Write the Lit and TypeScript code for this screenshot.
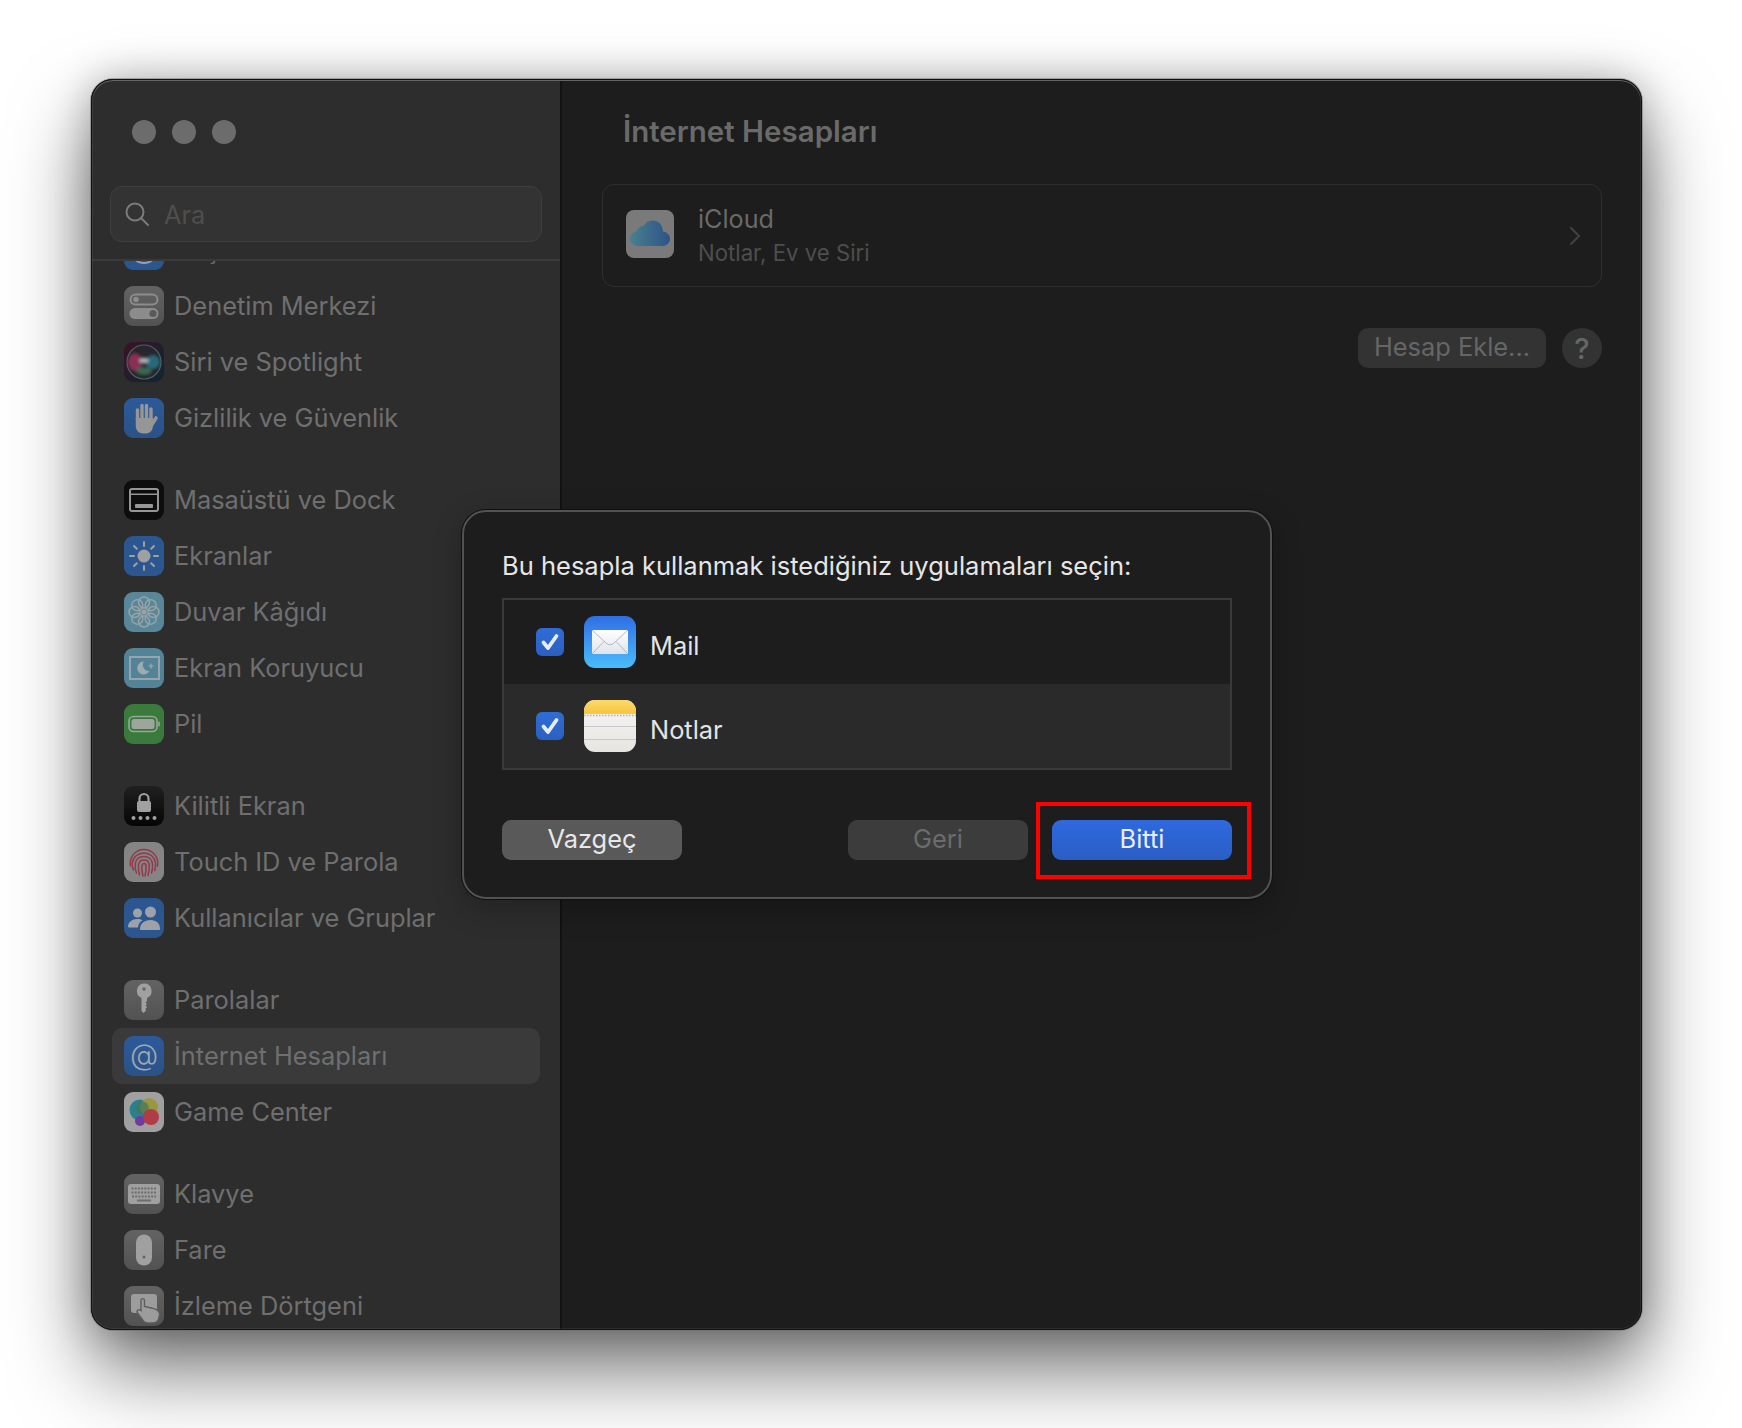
import { LitElement, html, css, svg } from 'lit';
import { customElement } from 'lit/decorators.js';

const FONT = 'Inter, "Noto Sans", sans-serif';

// sidebar icons, all drawn in a 40x40 box
const gray = '#969696';
const icons: Record<string, any> = {
  access: svg`<rect width="40" height="40" rx="9" fill="#2c5690"/><circle cx="20" cy="20" r="13" fill="none" stroke="#8f9fb5" stroke-width="2"/>`,
  control: svg`<rect width="40" height="40" rx="9" fill="url(#gGray)"/>
    <rect x="6.500" y="8.500" width="27" height="10" rx="5" fill="none" stroke="#8c8c8c" stroke-width="2"/><circle cx="12" cy="13.500" r="2.800" fill="#8c8c8c"/>
    <rect x="5.500" y="22" width="29" height="11" rx="5.500" fill="#8c8c8c"/><circle cx="29" cy="27.500" r="3.600" fill="#5a5a5a"/>`,
  siri: svg`<rect width="40" height="40" rx="9" fill="url(#gSiri)"/>
    <circle cx="20" cy="20" r="17" fill="#26262c" stroke="#4f6063" stroke-width="1.200"/>
    <g filter="url(#fSoft)">
      <ellipse cx="11" cy="20" rx="7" ry="9" fill="#8a2f55"/>
      <ellipse cx="29" cy="20" rx="7" ry="7" fill="#27697a"/>
      <ellipse cx="20" cy="29" rx="8" ry="4" fill="#37684f"/>
      <ellipse cx="20" cy="18.500" rx="5" ry="3" fill="#a9a9b4"/>
    </g>`,
  hand: svg`<rect width="40" height="40" rx="9" fill="url(#gBlue)"/>
    <g stroke="${gray}" stroke-linecap="round" fill="none"><path d="M13.500 22V12M18 20V7.500M22.500 20V7.500M27 22V11" stroke-width="3.400"/><path d="M27 28l5-8" stroke-width="3.600"/></g>
    <path d="M11.800 20h17v8.500c0 4.500-3.500 7-7.500 7h-2c-4.500 0-7.500-3-7.500-7.500z" fill="${gray}"/>`,
  desktop: svg`<rect width="40" height="40" rx="9" fill="#0d0d0d"/><rect x="6" y="9" width="28" height="22" rx="2" fill="none" stroke="#969696" stroke-width="2"/><rect x="6" y="13.500" width="28" height="1.500" fill="#969696"/><rect x="11" y="24" width="18" height="4" rx="1" fill="#969696"/>`,
  display: svg`<rect width="40" height="40" rx="9" fill="#2c5690"/><circle cx="20" cy="20" r="6.500" fill="#a0a0a0"/>
    <g stroke="#a0a0a0" stroke-width="2" stroke-linecap="round"><path d="M20 6v4M20 30v4M6 20h4M30 20h4M10 10l2.800 2.800M27.200 27.200l2.800 2.800M30 10l-2.800 2.800M12.800 27.200L10 30"/></g>`,
  wallpaper: svg`<rect width="40" height="40" rx="9" fill="#588799"/>
    <g fill="none" stroke="#98a3a7" stroke-width="1.500"><circle cx="20" cy="10.500" r="5.500"/><circle cx="20" cy="29.500" r="5.500"/><circle cx="10.500" cy="20" r="5.500"/><circle cx="29.500" cy="20" r="5.500"/><circle cx="13.300" cy="13.300" r="5.500"/><circle cx="26.700" cy="13.300" r="5.500"/><circle cx="13.300" cy="26.700" r="5.500"/><circle cx="26.700" cy="26.700" r="5.500"/></g><circle cx="20" cy="20" r="2.500" fill="#98a3a7"/>`,
  saver: svg`<rect width="40" height="40" rx="9" fill="#538396"/><rect x="6" y="9" width="29" height="22" fill="none" stroke="#96a5ab" stroke-width="2"/>
    <path d="M20 13.500a6.500 6.500 0 1 0 5.500 9.500a6 6 0 0 1-5.500-9.500z" fill="#9eabaf"/><path d="M27 15.500v5M24.500 18h5" stroke="#9eabaf" stroke-width="1.200"/>`,
  battery: svg`<rect width="40" height="40" rx="9" fill="#3a7a3d"/><rect x="5" y="12.500" width="28" height="15" rx="4.500" fill="none" stroke="#9aa59a" stroke-width="1.600"/><rect x="7.500" y="15" width="23" height="10" rx="2.500" fill="#9da59d"/><rect x="34.200" y="17.500" width="1.600" height="5" rx=".8" fill="#9aa59a"/>`,
  lock: svg`<rect width="40" height="40" rx="9" fill="url(#gBlack)"/><path d="M15.500 16v-3.500a4.500 4.500 0 0 1 9 0V16" fill="none" stroke="#a0a0a0" stroke-width="2.200"/><rect x="13" y="15" width="14" height="11" rx="2" fill="#a0a0a0"/>
    <g fill="#a0a0a0"><circle cx="9.500" cy="32" r="2"/><circle cx="16.500" cy="32" r="2"/><circle cx="23.500" cy="32" r="2"/><circle cx="30.500" cy="32" r="2"/></g>`,
  touch: svg`<rect width="40" height="40" rx="9" fill="#858585"/>
    <g fill="none" stroke="#94384a" stroke-width="1.500" stroke-linecap="round"><path d="M6.500 24c-1.500-9 5-16.500 13.500-16.500S35 15 33.500 24"/><path d="M9.500 28c-1-2-1.500-4.500-1.200-7C9 15 14 11 20 11s10.500 4 11.500 10c.3 2.500 0 5-.8 7.500"/><path d="M12.500 31c-1.500-3-1.500-6.500-1.200-9.500C12 17 15.500 14.500 20 14.500s8 3 8.500 7.500c.3 3 0 6-.9 9"/><path d="M15.500 33c-1-3.500-1.200-7.500-1-10.500C15 19.500 17 18 20 18s5 2 5.200 5c.2 3.500-.2 7-1.200 10.500"/><path d="M19 34c-.8-3.500-1.500-7.500-1-10.500.2-1.200 1-2 2-2s2 .8 2.100 2.500c.2 3.500-.4 7-1.100 10"/></g>`,
  users: svg`<rect width="40" height="40" rx="9" fill="#2c5690"/><g fill="#9ea2a8"><circle cx="13.500" cy="15" r="4.500"/><circle cx="26.500" cy="14" r="5.500"/><path d="M4 29c0-5 4-8 9.500-8c2 0 3.500.4 5 1.200C15.500 24 14 26.500 14 29.500H5c-.6 0-1-.2-1-.5z"/><path d="M16 31c0-5.500 4.500-9 10.500-9S36 25.500 36 31c0 .6-.4 1-1 1H17c-.6 0-1-.4-1-1z"/></g>`,
  key: svg`<rect width="40" height="40" rx="9" fill="url(#gGray)"/><path d="M20 3.500a7.500 7.500 0 0 1 3 14.400V21l-1.500 1.500 1.500 1.500-1.500 1.500 1.500 1.500-1.500 2 .5 1.500-2.500 2.500-2-2V17.900A7.500 7.500 0 0 1 20 3.500z" fill="#a0a0a0"/><circle cx="20" cy="9" r="1.800" fill="#666"/>`,
  at: svg`<rect width="40" height="40" rx="9" fill="url(#gBlue)"/><text x="20" y="28.500" text-anchor="middle" font-family="Inter" font-weight="300" font-size="29" fill="#a0a7b0">@</text>`,
  game: svg`<rect width="40" height="40" rx="9" fill="#a0a0a0"/><circle cx="16" cy="18" r="10.500" fill="#2b8090"/><circle cx="25" cy="15" r="9" fill="#9a9636" opacity=".9"/><circle cx="18" cy="16" r="6.500" fill="#427560" opacity=".7"/><circle cx="16" cy="29" r="5" fill="#713aa0"/><circle cx="27" cy="25" r="8" fill="#b03c46"/>`,
  keyboard: svg`<rect width="40" height="40" rx="9" fill="url(#gGray)"/><rect x="4" y="10" width="32" height="20" rx="3" fill="#a0a0a0"/>
    <g stroke="#6d6d6d" stroke-width="2" stroke-dasharray="2 1.200"><path d="M7.500 14.500h25M7.500 18.500h25"/></g><path d="M8 22.500h24" stroke="#6d6d6d" stroke-width="2" stroke-dasharray="2 1.200"/><path d="M13 26.500h14" stroke="#6d6d6d" stroke-width="2"/>`,
  mouse: svg`<rect width="40" height="40" rx="9" fill="url(#gGray)"/><rect x="12" y="4.500" width="16" height="31" rx="8" fill="#a0a0a0"/><circle cx="20" cy="27" r="1.500" fill="#666"/>`,
  trackpad: svg`<rect width="40" height="40" rx="9" fill="url(#gGray)"/><rect x="7" y="8" width="26" height="19" rx="3" fill="#9c9c9c"/>
    <path d="M17 14.500c0-2.500 3.500-2.500 3.500 0v6l7 1.500c3 .8 9 2 8 7l-1 4c-1 3-3 4-6 4h-4c-3 0-4.500-1-6-3.500l-5-6.500c-1.500-2.500 1.500-4.500 3.500-2.500z" fill="#9c9c9c" stroke="#5e5e5e" stroke-width="1.400"/>`,
};

interface Item { label: string; icon: string; selected?: boolean; gap?: boolean }
const items: Item[] = [
  { label: 'Erişilebilirlik', icon: 'access' },
  { label: 'Denetim Merkezi', icon: 'control' },
  { label: 'Siri ve Spotlight', icon: 'siri' },
  { label: 'Gizlilik ve Güvenlik', icon: 'hand' },
  { label: 'Masaüstü ve Dock', icon: 'desktop', gap: true },
  { label: 'Ekranlar', icon: 'display' },
  { label: 'Duvar Kâğıdı', icon: 'wallpaper' },
  { label: 'Ekran Koruyucu', icon: 'saver' },
  { label: 'Pil', icon: 'battery' },
  { label: 'Kilitli Ekran', icon: 'lock', gap: true },
  { label: 'Touch ID ve Parola', icon: 'touch' },
  { label: 'Kullanıcılar ve Gruplar', icon: 'users' },
  { label: 'Parolalar', icon: 'key', gap: true },
  { label: 'İnternet Hesapları', icon: 'at', selected: true },
  { label: 'Game Center', icon: 'game' },
  { label: 'Klavye', icon: 'keyboard', gap: true },
  { label: 'Fare', icon: 'mouse' },
  { label: 'İzleme Dörtgeni', icon: 'trackpad' },
];

@customElement('app-root')
export class AppRoot extends LitElement {
  static styles = css`
    :host {
      display: block;
      width: 1742px;
      height: 1428px;
      box-sizing: border-box;
      padding: 79px 100px 98px 91px;
      background: #fff;
      font-family: ${css([FONT] as any)};
      overflow: hidden;
    }
    .window {
      position: relative;
      display: flex;
      height: 100%;
      border-radius: 22px;
      background: #1d1d1d;
      box-shadow: 0 0 0 1px rgba(110, 110, 110, 0.5), 0 40px 80px rgba(0, 0, 0, 0.55), 0 0 40px rgba(0, 0, 0, 0.25);
    }
    .window::after {
      content: '';
      position: absolute;
      inset: 0;
      z-index: 3;
      border: 1px solid #111;
      border-radius: 22px;
      box-shadow: inset 0 1px 0 #666, inset 0 0 0 1px rgba(255, 255, 255, 0.07);
      pointer-events: none;
    }
    .sidebar {
      width: 469px;
      flex: none;
      display: flex;
      flex-direction: column;
      background: #2d2d2d;
      border-right: 2px solid #121212;
      border-radius: 22px 0 0 22px;
      overflow: hidden;
    }
    .side-head {
      position: relative;
      z-index: 1;
      height: 182px;
      flex: none;
      box-sizing: border-box;
      background: #2d2d2d;
      border-bottom: 2px solid #3a3a3a;
    }
    .lights {
      display: flex;
      gap: 16px;
      padding: 41px 0 0 41px;
    }
    .lights i {
      width: 24px;
      height: 24px;
      border-radius: 50%;
      background: #6c6c6c;
    }
    .search {
      display: flex;
      align-items: center;
      height: 56px;
      box-sizing: border-box;
      margin: 42px 18px 0 19px;
      padding-left: 13px;
      gap: 14px;
      background: #333;
      border: 1px solid #3f3f3f;
      border-radius: 12px;
      color: #4e4e4e;
      font-size: 25.4px;
    }
    .list {
      margin-top: -39px;
      padding: 0 20px 0 21px;
    }
    .row {
      display: flex;
      align-items: center;
      gap: 10px;
      height: 56px;
      padding-left: 12px;
      border-radius: 10px;
      color: #6f6f6f;
      font-size: 25.4px;
      white-space: nowrap;
    }
    .row.gap {
      margin-top: 26px;
    }
    .row.selected {
      background: #3a3a3a;
    }
    .row svg {
      width: 40px;
      height: 40px;
      flex: none;
    }
    .row span {
      margin-bottom: 2px;
    }
    .main {
      flex: 1;
      min-width: 0;
      padding: 0 40px;
    }
    h1 {
      margin: 0;
      height: 105px;
      box-sizing: border-box;
      padding: 0 0 2px 21px;
      display: flex;
      align-items: center;
      font-size: 29.5px;
      font-weight: 600;
      color: #6a6a6a;
    }
    .card {
      display: flex;
      align-items: center;
      height: 103px;
      box-sizing: border-box;
      padding: 0 20px 0 23px;
      border: 1px solid #2e2e2e;
      border-radius: 12px;
    }
    .cloud {
      width: 48px;
      height: 48px;
      flex: none;
      margin: -3px 24px 0 0;
    }
    .card-text {
      flex: 1;
    }
    .card-title {
      font-size: 25.2px;
      line-height: 32px;
      color: #6a6a6a;
    }
    .card-sub {
      margin-top: 3px;
      font-size: 22.2px;
      line-height: 30px;
      color: #4e4e4e;
    }
    .actions {
      display: flex;
      justify-content: flex-end;
      gap: 16px;
      margin-top: 41px;
    }
    .add {
      width: 188px;
      height: 40px;
      box-sizing: border-box;
      padding-bottom: 4px;
      display: flex;
      align-items: center;
      justify-content: center;
      border-radius: 10px;
      background: #333;
      color: #666;
      font-size: 25.4px;
    }
    .help {
      width: 40px;
      height: 40px;
      display: flex;
      align-items: center;
      justify-content: center;
      border-radius: 50%;
      background: #333;
      color: #666;
      font-size: 29px;
      font-weight: 500;
    }
    .dialog {
      position: absolute;
      z-index: 2;
      left: 371px;
      top: 431px;
      width: 810px;
      height: 389px;
      box-sizing: border-box;
      padding: 38px 38px 0;
      background: #1d1d1d;
      border: 2px solid #525252;
      border-radius: 24px;
      box-shadow: 0 0 0 1px #0f0f0f, 0 10px 30px rgba(0, 0, 0, 0.25);
    }
    .dialog h2 {
      margin: 0 0 16px;
      font-size: 25.5px;
      line-height: 32px;
      font-weight: 400;
      color: #e6e6e6;
      white-space: nowrap;
    }
    .apps {
      border: 2px solid #3a3a3a;
    }
    .app {
      display: flex;
      align-items: center;
      height: 84px;
      padding-left: 32px;
      font-size: 25.4px;
      color: #e4e4e4;
    }
    .app:nth-child(2) {
      background: #2a2a2a;
    }
    .check {
      width: 28px;
      height: 28px;
      flex: none;
      margin-right: 20px;
    }
    .app-icon {
      width: 52px;
      height: 52px;
      flex: none;
      margin-right: 14px;
    }
    .app span {
      margin-top: 6px;
    }
    .buttons {
      display: flex;
      gap: 24px;
      margin-top: 50px;
    }
    .btn {
      width: 180px;
      height: 40px;
      box-sizing: border-box;
      padding-bottom: 4px;
      display: flex;
      align-items: center;
      justify-content: center;
      border-radius: 9px;
      font-size: 25.4px;
    }
    .cancel {
      background: #595959;
      color: #e8e8e8;
      margin-right: auto;
    }
    .back {
      background: #3c3c3c;
      color: #6c6c6c;
    }
    .done {
      position: relative;
      background: linear-gradient(#2f69de, #2a5dc5);
      color: #e8eefb;
    }
    .mark {
      position: absolute;
      inset: -18px -19px -19px -16px;
      border: 4px solid #f00;
    }
  `;

  private renderCheck() {
    return html`<svg class="check" viewBox="0 0 28 28">
      <rect width="28" height="28" rx="6" fill="url(#gCheck)" />
      <path d="M7.500 14.500l4.500 5.500 8.500-12" fill="none" stroke="#e6edfa" stroke-width="3.800" stroke-linecap="round" stroke-linejoin="round" />
    </svg>`;
  }

  render() {
    return html`
      <svg width="0" height="0" style="position:absolute">
        <defs>
          <filter id="fSoft" x="-20%" y="-20%" width="140%" height="140%"><feGaussianBlur stdDeviation="1.800"/></filter>
          <linearGradient id="gGray" x1="0" y1="0" x2="0" y2="1"><stop offset="0" stop-color="#636363"/><stop offset="1" stop-color="#525252"/></linearGradient>
          <linearGradient id="gBlue" x1="0" y1="0" x2="0" y2="1"><stop offset="0" stop-color="#2c5a9a"/><stop offset="1" stop-color="#2a5288"/></linearGradient>
          <linearGradient id="gBlack" x1="0" y1="0" x2="0" y2="1"><stop offset="0" stop-color="#202020"/><stop offset="1" stop-color="#050505"/></linearGradient>
          <linearGradient id="gSiri" x1="0" y1="0" x2="1" y2="1"><stop offset="0" stop-color="#3a1226"/><stop offset="1" stop-color="#0e2730"/></linearGradient>
          <linearGradient id="gCheck" x1="0" y1="0" x2="0" y2="1"><stop offset="0" stop-color="#2f6cd8"/><stop offset="1" stop-color="#2b60bf"/></linearGradient>
          <linearGradient id="gMail" x1="0" y1="0" x2="0" y2="1"><stop offset="0" stop-color="#2f6fe4"/><stop offset="1" stop-color="#4cbcfa"/></linearGradient>
          <linearGradient id="gEnv" x1="0" y1="0" x2="0" y2="1"><stop offset="0" stop-color="#fff"/><stop offset="1" stop-color="#dfe3e8"/></linearGradient>
          <linearGradient id="gNote" x1="0" y1="0" x2="0" y2="1"><stop offset="0" stop-color="#f7f6f5"/><stop offset="1" stop-color="#e7e5e1"/></linearGradient>
          <linearGradient id="gYellow" x1="0" y1="0" x2="0" y2="1"><stop offset="0" stop-color="#fbd96c"/><stop offset="1" stop-color="#f8c63c"/></linearGradient>
          <linearGradient id="gCloud" x1="0" y1="0" x2="1" y2="0"><stop offset="0" stop-color="#4a7f8e"/><stop offset="1" stop-color="#2c5488"/></linearGradient>
        </defs>
      </svg>
      <div class="window">
        <aside class="sidebar">
          <div class="side-head">
            <div class="lights"><i></i><i></i><i></i></div>
            <div class="search">
              <svg width="26" height="26" viewBox="0 0 26 26" fill="none" stroke="#7b7b7b" stroke-width="2"><circle cx="11" cy="11" r="8.500"/><path d="M17 17l7 7" stroke-linecap="round"/></svg>
              Ara
            </div>
          </div>
          <nav class="list">
            ${items.map(
              (it) => html`<div class="row ${it.gap ? 'gap' : ''} ${it.selected ? 'selected' : ''}">
                <svg viewBox="0 0 40 40">${icons[it.icon]}</svg><span>${it.label}</span>
              </div>`
            )}
          </nav>
        </aside>
        <section class="main">
          <h1>İnternet Hesapları</h1>
          <div class="card">
            <svg class="cloud" viewBox="0 0 48 48">
              <rect width="48" height="48" rx="8" fill="#7a7a7a" />
              <path d="M12 36c-4.500 0-8-3.200-8-7.300 0-3.700 2.800-6.600 6.400-7.100C11.800 17.700 15 15.500 18 15.800c1.700-3.500 5-5.300 8.800-5.300 5 0 9.200 3.700 9.700 8.500.3 1 .4 1.800.4 2.500 4 .6 7.100 3.500 7.100 7.200 0 4-3.400 7.300-8 7.300z" fill="url(#gCloud)" />
            </svg>
            <div class="card-text">
              <div class="card-title">iCloud</div>
              <div class="card-sub">Notlar, Ev ve Siri</div>
            </div>
            <svg width="12" height="20" viewBox="0 0 12 20" fill="none" stroke="#3f3f3f" stroke-width="2.400" stroke-linecap="round" stroke-linejoin="round"><path d="M2 2l8 8-8 8"/></svg>
          </div>
          <div class="actions">
            <div class="add">Hesap Ekle...</div>
            <div class="help">?</div>
          </div>
        </section>
        <div class="dialog">
          <h2>Bu hesapla kullanmak istediğiniz uygulamaları seçin:</h2>
          <div class="apps">
            <div class="app">
              ${this.renderCheck()}
              <svg class="app-icon" viewBox="0 0 52 52">
                <rect width="52" height="52" rx="11" fill="url(#gMail)" />
                <rect x="8" y="14" width="36" height="24" rx="1.500" fill="url(#gEnv)" />
                <path d="M8.500 14.500L22 27c2.500 2.300 5.500 2.300 8 0L43.500 14.500M8.500 37.500L20 25.500M43.500 37.500L32 25.500" fill="none" stroke="#a9b2bd" stroke-width="0.900" />
              </svg>
              <span>Mail</span>
            </div>
            <div class="app">
              ${this.renderCheck()}
              <svg class="app-icon" viewBox="0 0 52 52">
                <clipPath id="noteClip"><rect width="52" height="52" rx="11" /></clipPath>
                <g clip-path="url(#noteClip)">
                  <rect width="52" height="52" fill="url(#gNote)" />
                  <rect width="52" height="14" fill="url(#gYellow)" />
                  <path d="M0 15.500h52" stroke="#b0aeaa" stroke-width="1.500" stroke-dasharray="1.500 1.500" />
                  <path d="M0 26.500h52M0 39.500h52" stroke="#c9c6cb" stroke-width="1" />
                </g>
              </svg>
              <span>Notlar</span>
            </div>
          </div>
          <div class="buttons">
            <div class="btn cancel">Vazgeç</div>
            <div class="btn back">Geri</div>
            <div class="btn done">Bitti<div class="mark"></div></div>
          </div>
        </div>
      </div>
    `;
  }
}
